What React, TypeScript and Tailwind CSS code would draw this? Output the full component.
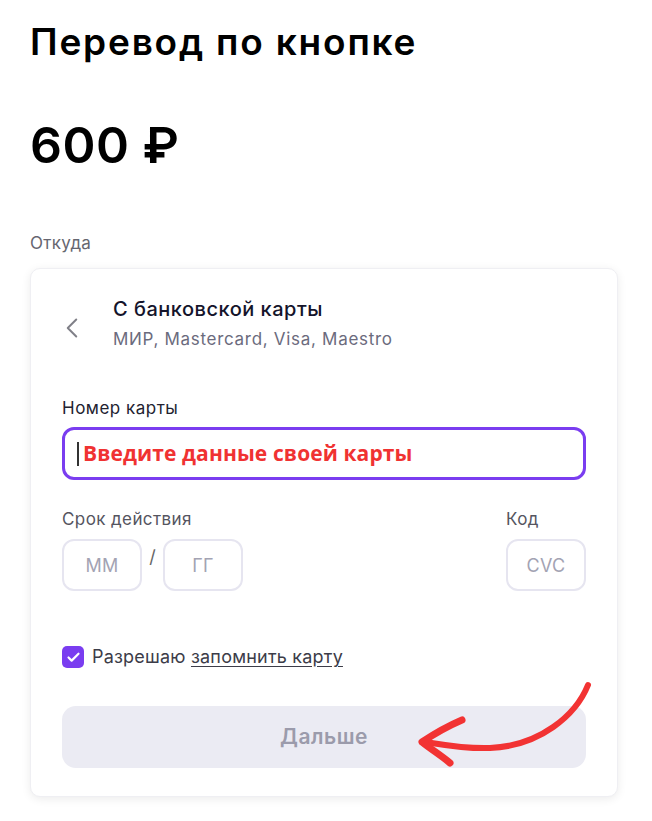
import { ChevronLeft, Check } from "lucide-react";

const font = { fontFamily: "Inter, 'Noto Sans', sans-serif" };

function SmallBox({ text }: { text: string }) {
  return (
    <div className="w-[80px] h-[52px] rounded-[12px] border-2 border-[#e6e5f0] flex items-center justify-center text-[18px] tracking-[0.3px] text-[#a3a3b3]">
      {text}
    </div>
  );
}

export default function App() {
  return (
    <div className="relative min-h-screen bg-white px-[30px] pt-[20px] text-[#111]" style={font}>
      <h1 className="text-[37px] leading-[44px] font-semibold tracking-[1.8px] text-black">
        Перевод по кнопке
      </h1>
      <div className="mt-[53px] text-[50px] leading-[56px] font-semibold tracking-[0.5px] text-black">
        600 ₽
      </div>
      <div className="mt-[58px] text-[17px] leading-[24px] tracking-[0.3px] text-[#666670]">Откуда</div>

      <div className="mt-[13px] w-[588px] rounded-[10px] bg-white border border-[#efeff3] shadow-[0_2px_10px_rgba(0,0,0,0.08)] px-[31px] pt-[26px] pb-[28px]">
        <div className="flex items-start">
          <div className="w-[51px] h-[66px] flex items-center">
            <ChevronLeft className="w-[34px] h-[34px] text-[#808088] -ml-[7px]" strokeWidth={1.4} />
          </div>
          <div>
            <div className="text-[20px] leading-[28px] font-medium tracking-[0.5px] text-[#14142b]">С банковской карты</div>
            <div className="mt-[4px] text-[17px] leading-[24px] tracking-[0.7px] text-[#6b6b7d]">МИР, Mastercard, Visa, Maestro</div>
          </div>
        </div>

        <div className="mt-[36px] text-[17px] leading-[22px] tracking-[0.5px] text-[#222230]">Номер карты</div>
        <div className="mt-[8px] h-[53px] rounded-[12px] border-[3px] border-[#7a3df0] flex items-center pl-[12px]">
          <span className="w-[2px] h-[24px] bg-[#333] mr-[4px]" />
          <span
            className="text-[21px] font-bold tracking-[0.1px] text-[#f03232]"
            style={{ fontFamily: "'Open Sans', 'Noto Sans', sans-serif" }}
          >
            Введите данные своей карты
          </span>
        </div>

        <div className="mt-[28px] flex justify-between">
          <div>
            <div className="text-[17px] leading-[22px] tracking-[0.4px] text-[#55555f]">Срок действия</div>
            <div className="mt-[9px] flex items-start">
              <SmallBox text="ММ" />
              <span className="w-[21px] text-center text-[18px] leading-[36px] text-[#666]">/</span>
              <SmallBox text="ГГ" />
            </div>
          </div>
          <div>
            <div className="text-[17px] leading-[22px] tracking-[0.4px] text-[#55555f]">Код</div>
            <div className="mt-[9px]">
              <SmallBox text="CVC" />
            </div>
          </div>
        </div>

        <div className="mt-[54px] flex items-center">
          <div className="w-[22px] h-[22px] rounded-[5px] bg-[#7a3df0] flex items-center justify-center">
            <Check className="w-[15px] h-[15px] text-white" strokeWidth={3.5} />
          </div>
          <span className="ml-[8px] text-[18px] leading-[24px] tracking-[0.2px] text-[#3c3c48]">
            Разрешаю <span className="underline underline-offset-[3px]">запомнить карту</span>
          </span>
        </div>

        <button className="mt-[37px] w-full h-[62px] rounded-[14px] bg-[#ebebf3] text-[21px] tracking-[0.5px] font-semibold text-[#9b9bab]">
          Дальше
        </button>
      </div>

      <svg
        className="absolute left-[400px] top-[670px] w-[220px] h-[110px]"
        viewBox="0 0 220 110"
        fill="none"
      >
        <path
          d="M188 15 C 176 45, 140 76, 90 78 C 65 79, 45 75, 26 72"
          stroke="#f23333"
          strokeWidth="6"
          strokeLinecap="round"
        />
        <path
          d="M62 50 C 48 56, 34 64, 22 72 C 32 80, 42 86, 50 93"
          stroke="#f23333"
          strokeWidth="7"
          strokeLinecap="round"
          strokeLinejoin="round"
        />
      </svg>
    </div>
  );
}
